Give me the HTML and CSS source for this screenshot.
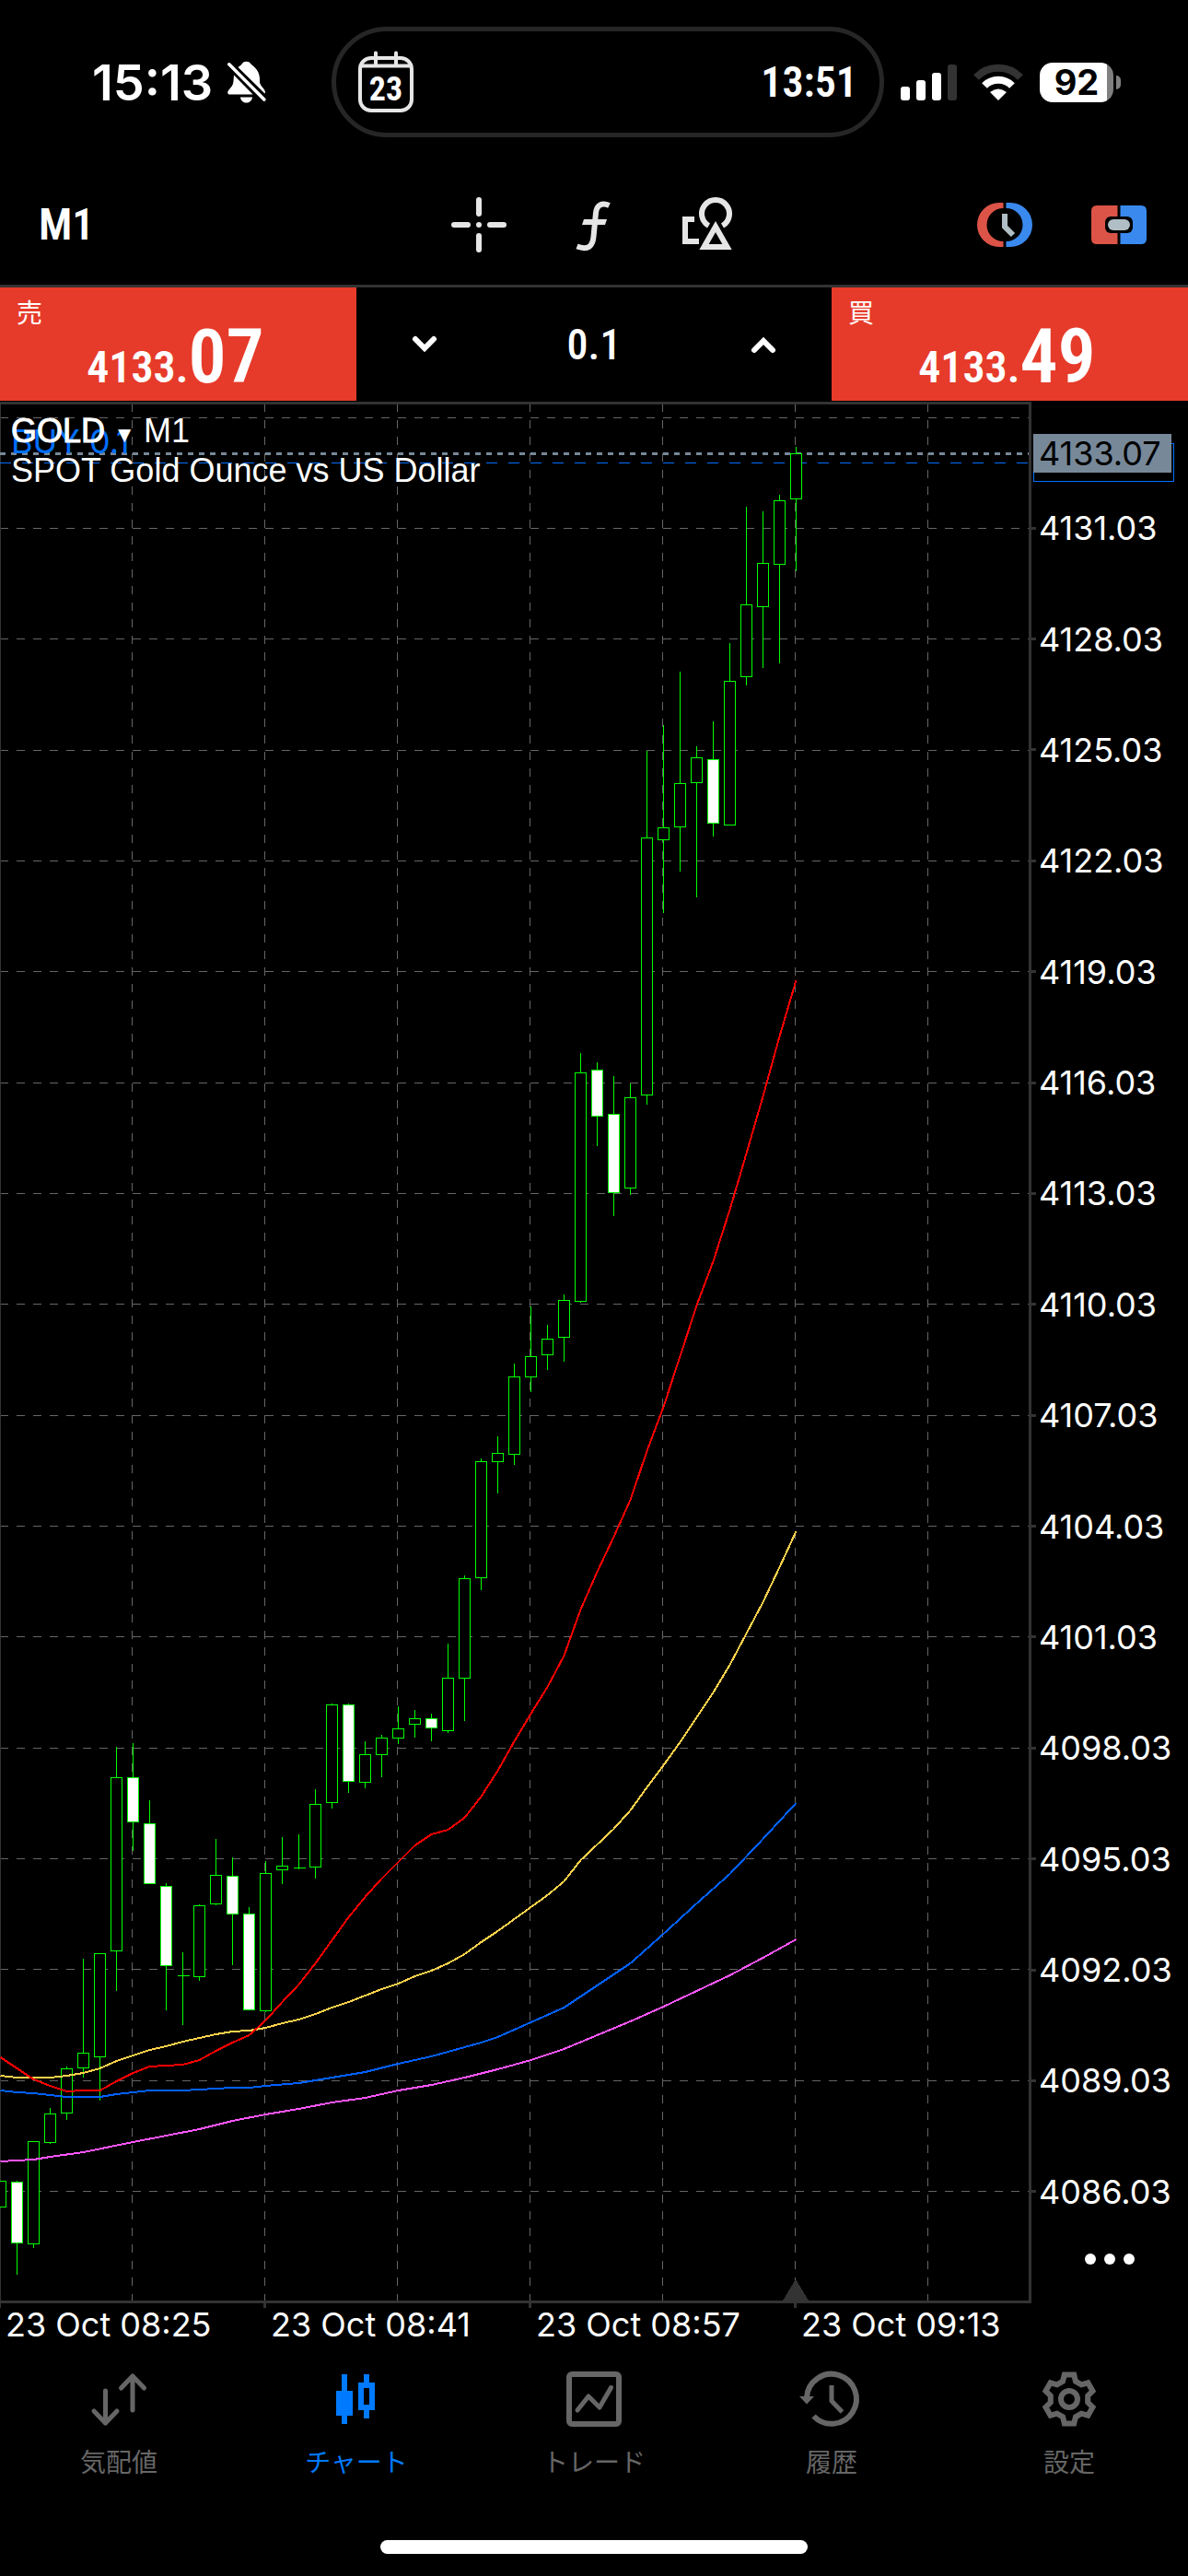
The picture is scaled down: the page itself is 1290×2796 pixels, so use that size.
FILE: index.html
```
<!DOCTYPE html>
<html lang="ja">
<head>
    <meta charset="UTF-8">
    <meta name="viewport" content="width=device-width, initial-scale=1.0">
    <title>GOLD M1</title>
    <link rel="stylesheet" href="styles.css">
</head>
<body>
    <header class="status">
        <div class="status-left">
            <span class="clock">15:13</span>
            <svg class="bell" viewBox="0 0 42 46" fill="#fff">
                <path d="M11.500 7C14 5 15.500 4 16 3C17.500 0 23.500 0 25 3C26 5 34.500 8 35 19V23C35.500 28 41 30 41 34.500C41 35.500 40.500 35.500 40 35Z"/>
                <path d="M7 15.500L27.500 36.500H2C0 36.500 0 34 0.500 33C3 29 6 28 6.500 22Z"/>
                <path d="M14 39.500H27C26 47.500 15 47.500 14 39.500Z"/>
                <path d="M1.800 3.800L39.800 42" stroke="#fff" stroke-width="3.600" stroke-linecap="round"/>
            </svg>
        </div>
        <div class="island">
            <div class="calendar">
                <svg viewBox="0 0 60 66" fill="none" stroke="#e6e6e6" stroke-width="4">
                    <rect x="2" y="7" width="56" height="57" rx="12"/>
                    <path d="M3 15.500H57M19 1.500V14M41 1.500V14" stroke-linecap="round"/>
                </svg>
                <span>23</span>
            </div>
            <span class="countdown">13:51</span>
        </div>
        <div class="status-right">
            <svg class="signal" viewBox="0 0 61 39" fill="#fff">
                <rect y="24" width="10" height="15" rx="3"/>
                <rect x="17" y="17" width="10" height="22" rx="3"/>
                <rect x="34" y="9" width="10" height="30" rx="3"/>
                <rect x="51" width="10" height="39" rx="3" fill="#333"/>
            </svg>
            <svg class="wifi" viewBox="0 0 54 40" fill="none" stroke-width="8">
                <path d="M3 15A33 33 0 0 1 51 15" stroke="#333"/>
                <path d="M12 24A21 21 0 0 1 42 24" stroke="#fff"/>
                <path d="M18 31Q27 24 36 31L27 40Z" fill="#fff"/>
            </svg>
            <div class="battery">92</div>
        </div>
    </header>

    <nav class="toolbar">
        <button class="timeframe">M1</button>
        <div class="tools">
            <button aria-label="Crosshair">
                <svg viewBox="0 0 60 60" stroke="#e6e6e6" stroke-width="6" stroke-linecap="round">
                    <path d="M30 3V18M30 42V57M3 30H18M42 30H57M30 30V30"/>
                </svg>
            </button>
            <button aria-label="Indicators">
                <svg viewBox="0 0 60 60" fill="none" stroke="#e6e6e6" stroke-width="6">
                    <path d="M47.500 9C40 5.500 34 8 33 17L30.500 43C29.500 53 25 58 12.500 53.500"/>
                    <path d="M20 24H45L43 30H18Z" fill="#e6e6e6" stroke="none"/>
                </svg>
            </button>
            <button aria-label="Objects">
                <svg viewBox="0 0 60 60" fill="none" stroke="#e6e6e6" stroke-width="6">
                    <path d="M31.500 31A15 15 0 1 1 46.500 31"/>
                    <path d="M39 32L51.500 54H26.500Z"/>
                    <path d="M16 24H6V48H21"/>
                </svg>
            </button>
        </div>
        <div class="actions">
            <button aria-label="Pending order">
                <svg viewBox="0 0 60 60">
                    <path fill="#dc5347" d="M28.500 6H24A24 24 0 0 0 24 54H28.500V48A18 18 0 0 1 28.500 12Z"/>
                    <path fill="#3a89ee" d="M31.500 6H36A24 24 0 0 1 36 54H31.500V48A18 18 0 0 0 31.500 12Z"/>
                    <path fill="none" stroke="#b0bec5" stroke-width="6" d="M30 18V32L39 41"/>
                </svg>
            </button>
            <button aria-label="One click trading">
                <svg viewBox="0 0 60 60">
                    <path fill="#dc5347" d="M6 9H28.500V51H6Q0 51 0 45V15Q0 9 6 9Z"/>
                    <path fill="#3a89ee" d="M31.500 9H54Q60 9 60 15V45Q60 51 54 51H31.500Z"/>
                    <rect x="15" y="21" width="30" height="18" rx="6"/>
                    <rect x="18" y="24" width="24" height="12" rx="6" fill="#b0bec5"/>
                </svg>
            </button>
        </div>
    </nav>

    <section class="trade">
        <button class="quote">
            <span class="side">売</span>
            <span class="price">4133.<b>07</b></span>
        </button>
        <div class="volume">
            <button aria-label="Decrease volume">
                <svg viewBox="0 0 28 20"><path d="M4 4L14 14L24 4"/></svg>
            </button>
            <input type="text" value="0.1" aria-label="Volume">
            <button aria-label="Increase volume">
                <svg viewBox="0 0 28 20"><path d="M4 16L14 6L24 16"/></svg>
            </button>
        </div>
        <button class="quote">
            <span class="side">買</span>
            <span class="price">4133.<b>49</b></span>
        </button>
    </section>

    <main class="chart">
        <div class="plot">
            <svg id="plot" viewBox="0 439 1117 2058" preserveAspectRatio="none"></svg>
            <span class="position">BUY 0.1</span>
            <div class="legend">
                <div><span class="symbol">GOLD</span><span class="caret">▼</span>M1</div>
                <div>SPOT Gold Ounce vs US Dollar</div>
            </div>
        </div>
        <div class="scale">
            <span>4131.03</span>
            <span>4128.03</span>
            <span>4125.03</span>
            <span>4122.03</span>
            <span>4119.03</span>
            <span>4116.03</span>
            <span>4113.03</span>
            <span>4110.03</span>
            <span>4107.03</span>
            <span>4104.03</span>
            <span>4101.03</span>
            <span>4098.03</span>
            <span>4095.03</span>
            <span>4092.03</span>
            <span>4089.03</span>
            <span>4086.03</span>
            <div class="open-tag"></div>
            <div class="bid-tag">4133.07</div>
            <button class="more" aria-label="More">
                <svg viewBox="0 0 54 12" fill="#fff">
                    <circle cx="6" cy="6" r="6"/><circle cx="27" cy="6" r="6"/><circle cx="48" cy="6" r="6"/>
                </svg>
            </button>
        </div>
        <div class="times">
            <span>23 Oct 08:25</span>
            <span>23 Oct 08:41</span>
            <span>23 Oct 08:57</span>
            <span>23 Oct 09:13</span>
        </div>
    </main>

    <nav class="tabs">
        <a href="#quotes">
            <svg viewBox="0 0 60 60" fill="none" stroke="currentColor" stroke-width="5" stroke-linecap="round" stroke-linejoin="round">
                <path d="M15.500 21V56M3 43L15.500 56L28 43M45 42V5M32.500 18L45 5L57.500 18"/>
            </svg>
            気配値
        </a>
        <a href="#chart" class="active">
            <svg viewBox="0 0 60 60" fill="currentColor">
                <path d="M14 3H20V21H26V48H20V57H14V48H8V21H14Z"/>
                <path fill-rule="evenodd" d="M38 3H44V12H50V42H44V51H38V42H32V12H38ZM38 18V36H44V18Z"/>
            </svg>
            チャート
        </a>
        <a href="#trade">
            <svg viewBox="0 0 60 60" fill="none" stroke="currentColor" stroke-width="6">
                <rect x="3" y="3" width="54" height="54" rx="3"/>
                <path d="M12 42L24 27L36 39L48.500 17.500" stroke-width="5" stroke-linecap="round" stroke-linejoin="round"/>
            </svg>
            トレード
        </a>
        <a href="#history">
            <svg viewBox="0 0 60 60" fill="none" stroke="currentColor" stroke-width="6">
                <path d="M3 28A27 27 0 1 1 10.500 48.500"/>
                <path d="M30 15V32L41.500 44" stroke-width="5"/>
                <path d="M-5 27H11L3 35.500Z" fill="currentColor" stroke="none"/>
            </svg>
            履歴
        </a>
        <a href="#settings">
            <svg viewBox="0 0 60 60" fill="none" stroke="currentColor" stroke-width="6">
                <path d="M24.800 3.500L35.200 3.500L37 10.700L43.200 14.300L50.400 12.300L55.500 21.200L50.200 26.400L50.200 33.600L55.500 38.800L50.400 47.700L43.200 45.700L37 49.300L35.200 56.500L24.800 56.500L23 49.300L16.800 45.700L9.600 47.700L4.500 38.800L9.800 33.600L9.800 26.400L4.500 21.200L9.600 12.300L16.800 14.300L23 10.700Z"/>
                <circle cx="30" cy="30" r="9"/>
            </svg>
            設定
        </a>
    </nav>
    <div class="home-bar"></div>

    <script>
        const plot = document.getElementById("plot");
        const STEP = 18;

        // high, body top, body bottom, low, 1 = falling candle
        const candles = [
            [2367, 2367, 2395, 2395, 0], [2367, 2368, 2434, 2469, 1], [2324, 2324, 2435, 2440, 0],
            [2288, 2294, 2325, 2327, 0], [2243, 2245, 2293, 2301, 0], [2126, 2228, 2244, 2255, 0],
            [2120, 2120, 2232, 2280, 0], [1896, 1929, 2117, 2161, 0], [1892, 1929, 1977, 2009, 1],
            [1954, 1979, 2044, 2044, 1], [2044, 2047, 2133, 2182, 1], [2119, 2144, 2144, 2198, 0],
            [2067, 2068, 2145, 2150, 0], [1996, 2035, 2066, 2068, 0], [2016, 2036, 2077, 2133, 1],
            [2070, 2077, 2181, 2181, 1], [2020, 2033, 2182, 2184, 0], [1994, 2025, 2029, 2045, 0],
            [1991, 2027, 2027, 2029, 0], [1942, 1958, 2026, 2039, 0], [1849, 1850, 1956, 1963, 0],
            [1849, 1850, 1933, 1946, 1], [1890, 1904, 1934, 1941, 0], [1883, 1886, 1904, 1929, 0],
            [1852, 1876, 1886, 1893, 0], [1856, 1865, 1871, 1886, 0], [1860, 1865, 1875, 1890, 1],
            [1784, 1821, 1878, 1881, 0], [1710, 1713, 1821, 1868, 0], [1583, 1586, 1712, 1726, 0],
            [1559, 1577, 1586, 1621, 0], [1480, 1494, 1578, 1590, 0], [1418, 1472, 1494, 1511, 0],
            [1438, 1453, 1470, 1487, 0], [1405, 1411, 1451, 1478, 0], [1143, 1164, 1412, 1414, 0],
            [1153, 1161, 1211, 1244, 1], [1168, 1209, 1294, 1320, 1], [1176, 1191, 1289, 1297, 0],
            [815, 909, 1188, 1199, 0], [787, 898, 911, 991, 0], [729, 850, 897, 946, 0],
            [810, 822, 849, 974, 0], [783, 824, 893, 908, 1], [698, 739, 895, 895, 0],
            [550, 656, 734, 744, 0], [555, 611, 658, 725, 0], [537, 543, 612, 720, 0],
            [485, 492, 541, 620, 0]
        ];

        // moving averages, one value per bar (null = straight through)
        const averages = [
            ["#ff55ff", [2346, 2345, 2344, 2341, null, 2336, null, null, 2325, null, 2318, null, 2311, null, 2302, null, 2295, null, 2289, null, 2282, null, 2277, null, 2269, null, 2263, null, 2255, null, 2246, null, 2236, null, 2224, null, 2209, null, 2194, null, 2178, null, 2161, null, 2144, null, 2125, null, 2105]],
            ["#0060ff", [2269, 2271, 2272, 2274, 2276, 2276, 2276, 2273, 2271, 2269, null, 2269, 2268, null, 2266, 2266, 2264, null, 2261, 2258, 2255, null, 2249, null, 2240, null, 2232, null, 2222, 2217, 2211, null, 2195, null, 2179, null, 2155, null, 2131, null, 2099, null, 2066, null, 2034, null, 1996, null, 1957]],
            ["#ffd24a", [2253, 2255, 2255, 2255, 2253, 2250, 2245, 2237, 2231, 2225, 2221, 2216, 2212, 2208, 2205, 2204, 2201, 2196, 2192, 2186, 2179, 2173, 2166, 2159, 2153, 2145, 2139, 2131, 2121, 2108, 2096, 2083, 2070, 2057, 2042, 2019, 2002, 1985, 1965, 1940, 1916, 1891, 1864, 1837, 1807, 1773, 1739, 1701, 1662]],
            ["#ff0000", [2233, 2245, 2257, 2264, 2270, 2269, 2269, 2259, 2250, 2243, 2242, 2241, 2236, 2226, 2217, 2209, 2193, 2173, 2154, 2131, 2106, 2081, 2059, 2039, 2021, 2003, 1991, 1986, 1973, 1950, 1922, 1890, 1860, 1831, 1797, 1747, 1706, 1668, 1628, 1575, 1527, 1472, 1417, 1369, 1313, 1252, 1190, 1125, 1064]]
        ];

        function line(x1, y1, x2, y2, cls) {
            return `<line class="${cls}" x1="${x1}" y1="${y1}" x2="${x2}" y2="${y2}"/>`;
        }

        let out = "";

        // grid
        for (let i = 0; i < 17; i++) {
            const y = Math.floor(453.3 + i * 120.33) + 0.5;
            out += line(0, y, 1117, y, "grid");
        }
        for (let x = 143.5; x < 1117; x += STEP * 8) {
            out += line(x, 438, x, 2497, "grid");
        }
        out += line(0.5, 438, 0.5, 2497, "edge");
        out += '<path class="shift" d="M850 2497L864 2474L878 2497Z"/>';

        // bid and open position levels
        out += line(0, 492.5, 1117, 492.5, "bid");
        out += line(0, 502.5, 1117, 502.5, "open");

        candles.forEach(([high, top, bottom, low, falling], i) => {
            const x = i * STEP + 0.5;
            out += line(x, high, x, top, "wick") + line(x, bottom, x, low, "wick");
            out += `<rect class="${falling ? "body down" : "body"}" x="${x - 6}" y="${top + 0.5}" width="12" height="${bottom - top}"/>`;
            if (top === bottom) out += line(x - 6, top + 0.5, x + 7, top + 0.5, "wick");
        });

        averages.forEach(([color, values]) => {
            const points = values.map((y, i) => y === null ? "" : `${i * STEP + 0.5},${y}`).join(" ");
            out += `<polyline class="average" stroke="${color}" points="${points}"/>`;
        });

        plot.innerHTML = out;
    </script>
</body>
</html>
```
FILE: styles.css
```
:root {
    --line: #333333;
    --red: #e63b2a;
    --blue: #007aff;
    --muted: #666666;
    --slate: #778899;
    --narrow: "Liberation Sans Narrow", "Roboto Condensed", "Roboto", sans-serif;
}

* {
    box-sizing: border-box;
    margin: 0;
    padding: 0;
}

body {
    font-family: "Inter", "Noto Sans CJK JP", sans-serif;
    background: #000;
    color: #fff;
    min-height: 100vh;
    display: flex;
    flex-direction: column;
}

button {
    font: inherit;
    color: inherit;
    background: none;
    border: none;
    cursor: pointer;
}

svg {
    display: block;
    overflow: visible;
}

/* status bar */
.status {
    display: grid;
    grid-template-columns: 1fr 600px 330px;
    align-items: center;
    height: 178px;
}

.status-left {
    display: flex;
    align-items: center;
    gap: 16px;
    padding-left: 100px;
}

.clock {
    font-size: 54px;
    font-weight: 600;
}

.bell {
    width: 42px;
    height: 46px;
}

.island {
    display: flex;
    align-items: center;
    justify-content: space-between;
    height: 120px;
    padding: 0 24px;
    border: 5px solid #262626;
    border-radius: 60px;
}

.calendar {
    position: relative;
    width: 60px;
    height: 66px;
}

.calendar span {
    position: absolute;
    inset: 16px 0 0;
    font-family: var(--narrow);
    font-size: 36px;
    font-weight: 700;
    line-height: 50px;
    text-align: center;
}

.countdown {
    font-family: var(--narrow);
    font-size: 46px;
    font-weight: 600;
}

.status-right {
    display: flex;
    align-items: center;
    gap: 18px;
    padding-left: 18px;
}

.signal {
    width: 61px;
    height: 39px;
}

.wifi {
    width: 54px;
    height: 40px;
}

.battery {
    position: relative;
    width: 80px;
    height: 43px;
    border-radius: 14px;
    background: linear-gradient(90deg, #fff 73px, #808080 73px);
    color: #000;
    font-size: 38px;
    font-weight: 700;
    line-height: 43px;
    text-align: center;
}

.battery::after {
    content: '';
    position: absolute;
    right: -8px;
    top: 14px;
    width: 5px;
    height: 15px;
    border-radius: 0 8px 8px 0;
    background: #808080;
}

/* toolbar */
.toolbar {
    display: grid;
    grid-template-columns: 1fr auto 1fr;
    align-items: center;
    height: 134px;
    padding: 0 45px 0 42px;
    border-bottom: 3px solid var(--line);
}

.timeframe {
    justify-self: start;
    font-family: var(--narrow);
    font-size: 48px;
    font-weight: 600;
}

.tools,
.actions {
    display: flex;
    gap: 64px;
}

.actions {
    justify-self: end;
}

.tools svg,
.actions svg,
.tabs svg {
    width: 60px;
    height: 60px;
}

/* one click trading */
.trade {
    display: grid;
    grid-template-columns: 3fr 4fr 3fr;
    height: 124px;
    padding-bottom: 1px;
}

.quote {
    position: relative;
    display: flex;
    align-items: flex-end;
    justify-content: center;
    background: var(--red);
}

.side {
    position: absolute;
    left: 18px;
    top: 6px;
    font-family: "Noto Sans CJK JP", sans-serif;
    font-size: 28px;
    line-height: 40px;
}

.price {
    font-family: var(--narrow);
    font-size: 48px;
    font-weight: 600;
    line-height: 72px;
    padding-right: 6px;
}

.price b {
    font-size: 82px;
    font-weight: 600;
}

.volume {
    display: grid;
    grid-template-columns: 148px 1fr 148px;
    align-items: center;
}

.volume button {
    display: flex;
    justify-content: center;
    padding: 40px 0;
}

.volume svg {
    width: 28px;
    height: 20px;
    fill: none;
    stroke: #fff;
    stroke-width: 6;
    stroke-linecap: round;
}

.volume input {
    width: 100%;
    border: none;
    background: none;
    color: #fff;
    font-family: var(--narrow);
    font-size: 46px;
    font-weight: 500;
    text-align: center;
}

/* chart */
.chart {
    flex: 1;
    display: grid;
    grid-template-columns: 1fr 170px;
    grid-template-rows: 1fr 60px;
}

.plot {
    position: relative;
    border: solid var(--line);
    border-width: 3px 3px 3px 0;
}

.plot svg {
    position: absolute;
    width: 100%;
    height: 100%;
    overflow: hidden;
    shape-rendering: crispEdges;
}

.grid {
    stroke: #666;
    stroke-dasharray: 9 9;
}

.edge {
    stroke: var(--line);
}

.shift {
    fill: var(--line);
}

.bid {
    stroke: var(--slate);
    stroke-width: 3;
    stroke-dasharray: 6 6;
}

.open {
    stroke: #0070ff;
    stroke-dasharray: 12 12;
}

.wick {
    stroke: #0f0;
}

.body {
    fill: #000;
    stroke: #0f0;
}

.body.down {
    fill: #fff;
}

.average {
    fill: none;
    stroke-width: 2;
}

.position {
    position: absolute;
    left: 12px;
    top: 18px;
    color: #0070ff;
    font-size: 36px;
    line-height: 44px;
}

.legend {
    position: absolute;
    left: 12px;
    top: 7px;
    font-family: "Liberation Sans", sans-serif;
    font-size: 36px;
    line-height: 43px;
}

.symbol {
    -webkit-text-stroke: 1px #fff;
}

.caret {
    display: inline-block;
    width: 42px;
    font-size: 24px;
    line-height: 24px;
    text-align: center;
}

.scale {
    position: relative;
    display: flex;
    flex-direction: column;
    padding: 77px 0 61px;
    font-size: 36px;
}

.scale span {
    flex: 1;
    display: flex;
    align-items: center;
    gap: 3px;
}

.scale span::before {
    content: '';
    width: 5px;
    height: 3px;
    background: var(--line);
}

.bid-tag,
.open-tag {
    position: absolute;
    left: 2px;
    height: 42px;
}

.bid-tag {
    top: 35px;
    width: 150px;
    padding-left: 6px;
    background: var(--slate);
    color: #000;
    line-height: 42px;
}

.open-tag {
    top: 45px;
    width: 153px;
    border: 1px solid #0070ff;
}

.more {
    position: absolute;
    left: 50%;
    bottom: 32px;
    padding: 10px 0;
    transform: translateX(-50%);
}

.more svg {
    width: 54px;
    height: 12px;
}

.times {
    display: grid;
    grid-template-columns: 9fr 9fr 9fr 8fr;
    font-size: 36px;
    line-height: 46px;
}

.times span {
    position: relative;
    padding-left: 6px;
    white-space: nowrap;
}

.times span::before {
    content: '';
    position: absolute;
    left: -2px;
    top: 0;
    width: 3px;
    height: 5px;
    background: var(--line);
}

/* tab bar */
.tabs {
    display: grid;
    grid-template-columns: repeat(5, 1fr);
    padding-top: 14px;
}

.tabs a {
    display: flex;
    flex-direction: column;
    align-items: center;
    gap: 16px;
    color: var(--muted);
    font-family: "Noto Sans CJK JP", sans-serif;
    font-size: 28px;
    line-height: 42px;
    text-decoration: none;
}

.tabs a.active {
    color: var(--blue);
}

.home-bar {
    width: 36%;
    height: 15px;
    margin: 65px auto 24px;
    border-radius: 8px;
    background: #fff;
}
```
